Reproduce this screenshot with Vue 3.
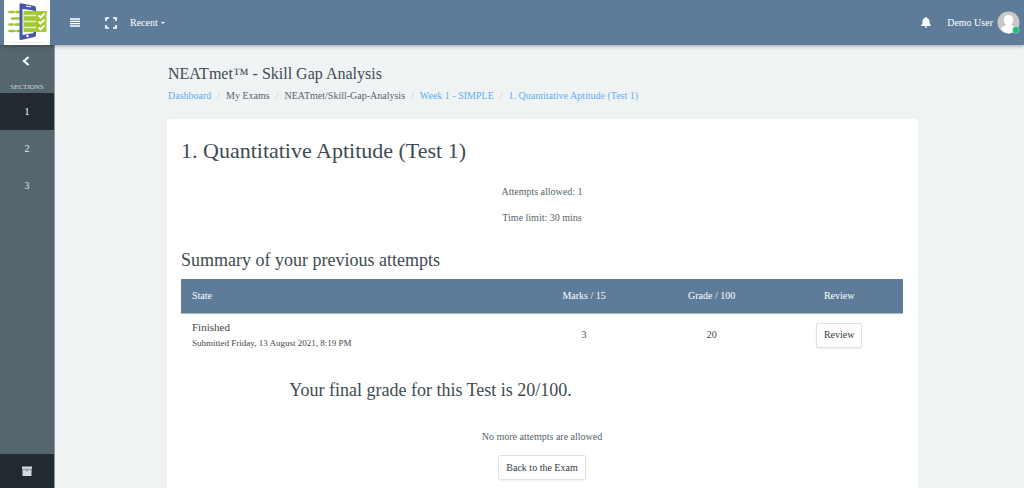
<script setup>
const sections = ['1', '2', '3']
const crumbs = [
  { text: 'Dashboard', link: true },
  { text: 'My Exams' },
  { text: 'NEATmet/Skill-Gap-Analysis' },
  { text: 'Week 1 - SIMPLE', link: true },
  { text: '1. Quantitative Aptitude (Test 1)', link: true },
]
const attempts = [
  { state: 'Finished', detail: 'Submitted Friday, 13 August 2021, 8:19 PM', marks: '3', grade: '20' },
]
</script>

<template>
  <div class="page">
    <header class="topbar">
      <a class="logo" href="#" aria-label="Home">
        <svg viewBox="0 0 46 45" width="46" height="45" aria-hidden="true">
          <g stroke="#9fc52e" stroke-width="2.6" stroke-linecap="round">
            <path d="M5.500 12h4M12.500 12h3M8 18.500h9M5.500 24.500h3M11.500 24.500h5M5.500 31h5M13.500 31h2" />
          </g>
          <path d="M15.500 4.500q0-1.500 1.600-1.200L30.500 6q1.500.4 1.500 2V35q0 1.500-1.500 2L17 40q-1.500.300-1.500-1.500z" fill="#4558a7" />
          <path d="M18.500 9l11 1.500v22.500l-11 2z" fill="#fff" />
          <path d="M19.500 11h23v21h-23z" fill="#a5c934" />
          <path d="M20 15.500h12M20 21.500h12M20 27.500h12" stroke="#e6f0c4" stroke-width="1.400" />
          <path d="M34.500 15.500l2 2 4-4M34.500 21.500l2 2 4-4M34.500 27.500l2 2 4-4" fill="none" stroke="#fff" stroke-width="1.800" />
          <path d="M22 6l5 1" stroke="#fff" stroke-width="1.200" />
          <circle cx="23.500" cy="36" r="1.300" fill="#fff" />
          <path d="M6 42.500h34" stroke="#ececec" />
        </svg>
      </a>
      <button class="icon-btn menu" type="button" aria-label="Menu">
        <svg viewBox="0 0 10 9" width="10" height="9"><path d="M0 1h10M0 3.300h10M0 5.700h10M0 8h10" stroke="#fff" stroke-width="1.300" /></svg>
      </button>
      <button class="icon-btn full" type="button" aria-label="Full screen">
        <svg viewBox="0 0 12 12" width="12" height="12"><path d="M1 4V1h3M8 1h3v3M11 8v3H8M4 11H1V8" fill="none" stroke="#fff" stroke-width="1.700" /></svg>
      </button>
      <button class="recent" type="button">Recent<span class="caret"></span></button>
      <button class="icon-btn bell" type="button" aria-label="Notifications">
        <svg viewBox="0 0 10 11" width="10" height="11"><path d="M5 0q.8 0 .8.900C7.700 1.300 8.500 2.800 8.500 4.500c0 2 .4 2.900 1.300 3.600q.3.900-.5.900H.700q-.8 0-.5-.9C1.100 7.400 1.500 6.500 1.500 4.500 1.500 2.800 2.300 1.300 4.200.900 4.200 0 4.400 0 5 0zM3.700 9.600h2.600Q6.100 11 5 11T3.700 9.600z" fill="#fff" /></svg>
      </button>
      <button class="user" type="button">
        <span>Demo User</span>
        <svg viewBox="0 0 24 24" width="24" height="24" aria-hidden="true">
          <circle cx="11.500" cy="11.500" r="11" fill="#c8c8c8" />
          <path d="M11.500 4c3 0 4.700 2 4.700 4.800 0 2-.8 3.600-1.900 4.700.2 1.800 3.700 1.600 4.900 4.300A11 11 0 0 1 11.500 22.500a11 11 0 0 1-7.700-4.700c1.200-2.700 4.700-2.500 4.900-4.300C7.600 12.400 6.800 10.800 6.800 8.800 6.800 6 8.500 4 11.500 4z" fill="#fff" />
          <circle cx="19" cy="19" r="3.300" fill="#16c172" stroke="#8fd9b5" stroke-width=".6" />
        </svg>
      </button>
    </header>

    <div class="body">
      <nav class="sidebar" aria-label="Sections">
        <button class="back" type="button" aria-label="Collapse">
          <svg viewBox="0 0 8 10" width="8" height="10"><path d="M6.500 1L2 5l4.500 4" fill="none" stroke="#fff" stroke-width="2.200" /></svg>
        </button>
        <span class="label">SECTIONS</span>
        <a v-for="(s, i) in sections" :key="s" href="#" class="section" :class="{ active: i === 0 }">{{ s }}</a>
        <a class="archive" href="#" aria-label="Archive">
          <svg viewBox="0 0 10 10" width="10" height="10"><path d="M0 .500h10V3H0zM.500 3.300h9V10h-9z" fill="#d8dadb" /><path d="M0 3h10" stroke="#8d9295" stroke-width=".6" /><path d="M3.500 4.600h3" stroke="#858a8d" /></svg>
        </a>
      </nav>

      <main class="main">
        <h1 class="course">NEATmet™ - Skill Gap Analysis</h1>
        <nav aria-label="Breadcrumb">
          <ol class="crumbs">
            <li v-for="c in crumbs" :key="c.text">
              <a v-if="c.link" href="#">{{ c.text }}</a>
              <span v-else>{{ c.text }}</span>
            </li>
          </ol>
        </nav>

        <section class="card">
          <h2 class="title">1. Quantitative Aptitude (Test 1)</h2>
          <div class="info">
            <p>Attempts allowed: 1</p>
            <p>Time limit: 30 mins</p>
          </div>
          <h3 class="subtitle">Summary of your previous attempts</h3>
          <table class="attempts">
            <thead>
              <tr>
                <th class="state">State</th>
                <th>Marks / 15</th>
                <th>Grade / 100</th>
                <th>Review</th>
              </tr>
            </thead>
            <tbody>
              <tr v-for="a in attempts" :key="a.detail">
                <td class="state"><span class="status">{{ a.state }}</span><span class="detail">{{ a.detail }}</span></td>
                <td>{{ a.marks }}</td>
                <td>{{ a.grade }}</td>
                <td><button class="btn" type="button">Review</button></td>
              </tr>
            </tbody>
          </table>
          <h3 class="final">Your final grade for this Test is 20/100.</h3>
          <div class="finish">
            <p>No more attempts are allowed</p>
            <button class="btn" type="button">Back to the Exam</button>
          </div>
        </section>
      </main>
    </div>
  </div>
</template>

<style>
body {
  background: #eff3f4;
}
</style>

<style scoped>
.page {
  font-family: "Liberation Serif", serif;
  font-size: 10px;
  line-height: 16px;
  color: #56646b;
  display: flex;
  flex-direction: column;
  height: 100vh;
  overflow: hidden;
}
* {
  box-sizing: border-box;
}
a {
  text-decoration: none;
}
button {
  font: inherit;
  cursor: pointer;
}
h1, h2, h3, p, ol {
  margin: 0;
  padding: 0;
  font-weight: 400;
}
svg {
  display: block;
}
.topbar {
  flex: none;
  display: flex;
  align-items: center;
  height: 45px;
  padding: 0 3px 0 4px;
  background: #5e7c99;
  box-shadow: 0 1px 4px rgba(0, 0, 0, 0.35);
  position: relative;
}
.logo {
  background: #fff;
}
.topbar button {
  border: 0;
  padding: 0;
  background: none;
  color: #fff;
}
.menu {
  margin-left: 20px;
}
.full {
  margin-left: 25px;
}
.recent {
  display: flex;
  align-items: center;
  gap: 3px;
  margin-left: 13px;
}
.caret {
  border: 2px solid transparent;
  border-top-color: #fff;
  border-bottom: 0;
}
.bell {
  margin-left: auto;
}
.user {
  display: flex;
  align-items: center;
  gap: 4px;
  margin-left: 16px;
}
.body {
  flex: 1;
  display: flex;
  min-height: 0;
}
.sidebar {
  flex: none;
  display: flex;
  flex-direction: column;
  width: 55px;
  background: #55676e;
  border-right: 1px solid #8c999e;
}
.back {
  display: flex;
  justify-content: center;
  align-items: center;
  height: 32px;
  border: 0;
  padding: 0 2px 0 0;
  background: none;
}
.label {
  height: 16px;
  font-size: 7px;
  text-align: center;
  line-height: 20px;
  color: #d5dadc;
}
.section {
  height: 37px;
  line-height: 37px;
  text-align: center;
  color: #e3e7e8;
}
.section.active {
  background: #222a31;
  color: #fff;
}
.archive {
  display: flex;
  justify-content: center;
  align-items: center;
  height: 34px;
  margin-top: auto;
  background: #222a31;
}
.main {
  flex: 1;
  min-width: 0;
  padding: 18px 106px 0 112px;
}
.course {
  font-size: 16px;
  line-height: 22px;
  color: #3d4b52;
  padding-left: 1px;
}
.crumbs {
  display: flex;
  list-style: none;
  padding: 3px 0 0 1px;
}
.crumbs li + li::before {
  content: "/";
  padding: 0 6px;
  color: #c3c9cc;
}
.crumbs a {
  color: #64aef0;
}
.card {
  margin-top: 15px;
  padding: 18px 15px 18px 14px;
  background: #fff;
  border-radius: 3px;
  min-height: 400px;
}
.title {
  font-size: 22px;
  line-height: 28px;
  color: #3d4b52;
}
.info {
  display: flex;
  flex-direction: column;
  gap: 10px;
  padding: 19px 0 22px;
  text-align: center;
}
.subtitle,
.final {
  font-size: 18px;
  line-height: 24px;
  color: #3d4b52;
}
.attempts {
  width: 100%;
  margin-top: 7px;
  border-collapse: collapse;
  table-layout: fixed;
  color: #3f474b;
}
th,
td {
  padding: 0;
  font-weight: 400;
  text-align: center;
}
th {
  height: 34px;
  background: #5e7c99;
  border-bottom: 1px solid #a9bac9;
  color: #fff;
}
td {
  height: 44px;
}
th.state,
td.state {
  width: 47%;
  padding-left: 11px;
  text-align: left;
}
.status {
  display: block;
  font-size: 11px;
}
.detail {
  display: block;
  font-size: 9px;
}
.btn {
  height: 25px;
  padding: 0 7px;
  border: 1px solid #dfe2e4;
  border-radius: 2px;
  background: #fff;
  color: #343b3f;
  box-shadow: 0 1px 2px rgba(0, 0, 0, 0.08);
}
.final {
  margin: 21px 0 0 15%;
}
.finish {
  display: flex;
  flex-direction: column;
  align-items: center;
  gap: 10px;
  padding-top: 27px;
}
</style>
